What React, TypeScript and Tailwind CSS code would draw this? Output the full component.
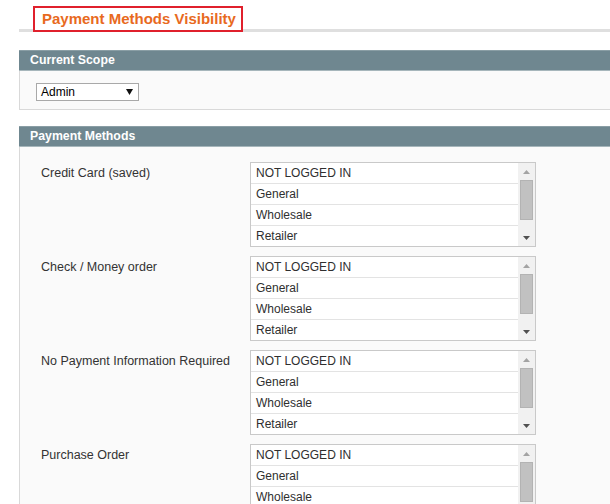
import React from 'react';

const GROUPS = ['NOT LOGGED IN', 'General', 'Wholesale', 'Retailer'];
const METHODS = ['Credit Card (saved)', 'Check / Money order', 'No Payment Information Required', 'Purchase Order'];

const ListBox: React.FC = () => (
  <div className="relative w-[286px] h-[85px] border border-[#c9c9c9] bg-white overflow-hidden">
    <div className="mr-[17px]">
      {GROUPS.map((g) => (
        <div key={g} className="h-[21px] leading-[20px] pl-[5px] border-b border-[#e3e3e3] text-[12px] text-[#2f2f2f]">
          {g}
        </div>
      ))}
    </div>
    {/* scrollbar */}
    <div className="absolute top-0 right-0 w-[17px] h-full bg-[#f1f1f1] flex flex-col items-center">
      <div className="h-[17px] flex items-center justify-center">
        <svg width="7" height="4" viewBox="0 0 7 4"><path d="M0 4 L3.5 0 L7 4 Z" fill="#a3a3a3" /></svg>
      </div>
      <div className="w-[13px] h-[40px] bg-[#c1c1c1] border border-[#b3b3b3]" />
      <div className="flex-1" />
      <div className="h-[17px] flex items-center justify-center">
        <svg width="7" height="4" viewBox="0 0 7 4"><path d="M0 0 L7 0 L3.5 4 Z" fill="#505050" /></svg>
      </div>
    </div>
  </div>
);

const SectionHead: React.FC<{ title: string }> = ({ title }) => (
  <div className="h-[21px] bg-[#6f8790] border-t border-[#8a9ea5] border-b border-b-[#a6b6bb] pl-[11px] flex items-center">
    <span className="text-white font-bold text-[12.3px]">{title}</span>
  </div>
);

export default function App() {
  return (
    <div className="w-[610px] h-[504px] bg-white overflow-hidden" style={{ fontFamily: '"Liberation Sans", Arial, sans-serif' }}>
      <div className="pt-[6px] pl-[19px]">
        {/* Title */}
        <div className="w-[600px] border-b-[3px] border-[#dfdfdf] h-[26px] pl-[14px]">
          <div className="inline-flex items-center h-[26px] w-[210px] border-2 border-[#e0202c] bg-white pl-[7px]">
            <span className="text-[15px] font-bold text-[#e86a1e] whitespace-nowrap">Payment Methods Visibility</span>
          </div>
        </div>

        {/* Current Scope */}
        <div className="mt-[18px] w-[600px]">
          <SectionHead title="Current Scope" />
          <div className="h-[39px] bg-[#fafafa] border-l border-b border-[#d9d9d9] pl-[16px] pt-[12px]">
            <div className="w-[103px] h-[18px] border border-[#a9a9a9] bg-white flex items-center justify-between pl-[4px] pr-[5px]">
              <span className="text-[12px] text-black">Admin</span>
              <svg width="7" height="6" viewBox="0 0 7 6"><path d="M0 0 L7 0 L3.5 6 Z" fill="#111" /></svg>
            </div>
          </div>
        </div>

        {/* Payment Methods */}
        <div className="mt-[16px] w-[600px]">
          <SectionHead title="Payment Methods" />
          <div className="bg-[#fafafa] border-l border-[#d9d9d9] pl-[21px] pt-[15px] pb-[20px] flex flex-col gap-[9px]">
            {METHODS.map((m) => (
              <div key={m} className="flex">
                <div className="w-[209px] text-[12.5px] text-[#333] pt-[2px]">{m}</div>
                <ListBox />
              </div>
            ))}
          </div>
        </div>
      </div>
    </div>
  );
}
